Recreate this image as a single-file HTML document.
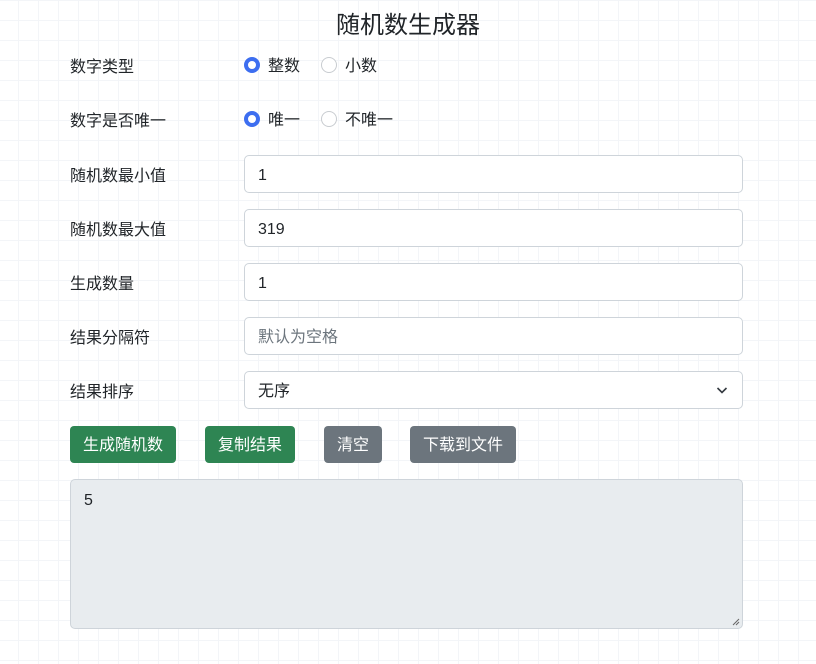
<!DOCTYPE html>
<html><head><meta charset="utf-8"><style>
*{box-sizing:border-box;margin:0;padding:0}
body{width:816px;height:664px;overflow:hidden;font-family:"Liberation Sans","Noto Sans CJK SC",sans-serif;color:#212529;font-size:16px;
background-color:#fff;background-image:linear-gradient(#f3f5f8 1px,transparent 1px),linear-gradient(90deg,#f3f5f8 1px,transparent 1px);background-size:20px 20px;background-position:0 0,18px 0;position:relative}
.a{position:absolute}
h1{position:absolute;top:10px;left:0;width:816px;text-align:center;font-size:24px;font-weight:400;line-height:32px}
.lbl{left:70px;line-height:24px}
.inp{left:244px;width:499px;height:38px;border:1px solid #ced4da;border-radius:5px;background:#fff;padding:2px 13px 0;line-height:36px}
.r{width:16px;height:16px;border-radius:50%;border:1px solid #c8ccd0;background:#fff}
.r.on{border:4.5px solid #3d6ef0}
.btn{top:426px;height:37px;line-height:39px;color:#fff;border-radius:4px;text-align:center}
.g{background:#2e8553}.s{background:#6c757d}
</style></head><body>
<h1>随机数生成器</h1>
<div class="a lbl" style="top:56px">数字类型</div>
<div class="a r on" style="left:244px;top:57px"></div><div class="a" style="left:268px;top:55px;line-height:24px">整数</div>
<div class="a r" style="left:321px;top:57px"></div><div class="a" style="left:345px;top:55px;line-height:24px">小数</div>
<div class="a lbl" style="top:110px">数字是否唯一</div>
<div class="a r on" style="left:244px;top:111px"></div><div class="a" style="left:268px;top:109px;line-height:24px">唯一</div>
<div class="a r" style="left:321px;top:111px"></div><div class="a" style="left:345px;top:109px;line-height:24px">不唯一</div>
<div class="a lbl" style="top:165px">随机数最小值</div><div class="a inp" style="top:155px">1</div>
<div class="a lbl" style="top:219px">随机数最大值</div><div class="a inp" style="top:209px">319</div>
<div class="a lbl" style="top:273px">生成数量</div><div class="a inp" style="top:263px">1</div>
<div class="a lbl" style="top:327px">结果分隔符</div><div class="a inp" style="top:317px;color:#6c757d">默认为空格</div>
<div class="a lbl" style="top:381px">结果排序</div><div class="a inp" style="top:371px">无序
<svg class="a" style="right:14px;top:14px" width="12" height="9" viewBox="0 0 12 9"><path d="M1.5 2l4.5 4.5 4.5-4.5" fill="none" stroke="#343a40" stroke-width="1.6"/></svg></div>
<div class="a btn g" style="left:70px;width:106px">生成随机数</div>
<div class="a btn g" style="left:205px;width:90px">复制结果</div>
<div class="a btn s" style="left:324px;width:58px">清空</div>
<div class="a btn s" style="left:410px;width:106px">下载到文件</div>
<div class="a" style="left:70px;top:479px;width:673px;height:150px;background:#e8ecef;border:1px solid #ced4da;border-radius:5px;padding:9px 13px;line-height:24px">5
<svg class="a" style="right:2px;bottom:2px" width="8" height="8"><path d="M7 1L1 7M7 4L4 7" stroke="#666" stroke-width="1"/></svg></div>
</body></html>
